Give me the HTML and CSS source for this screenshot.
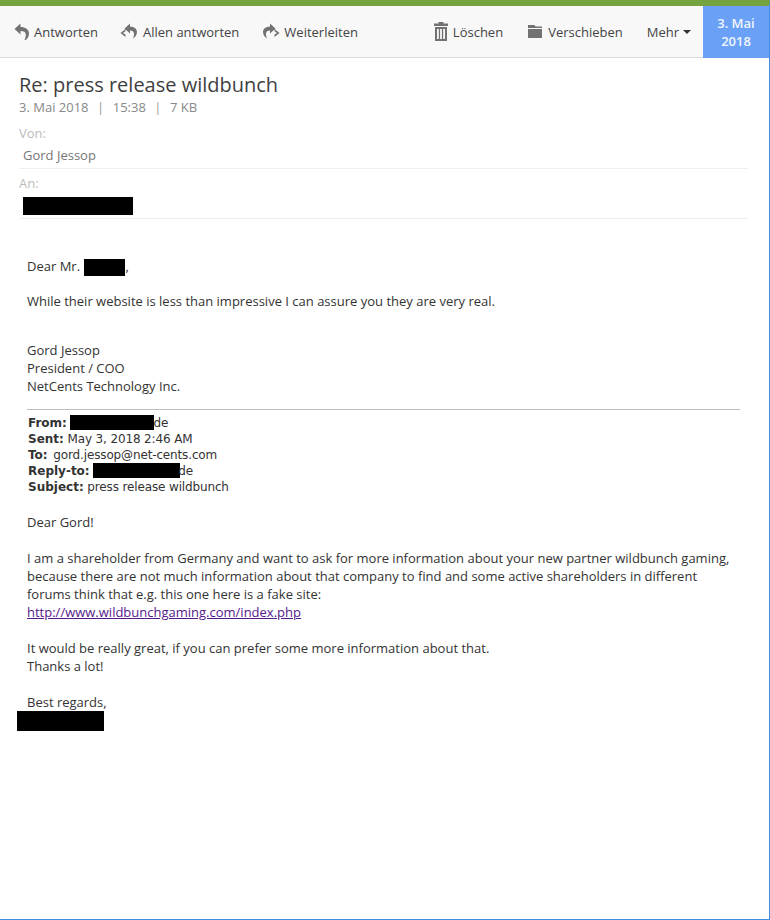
FILE: index.html
```html
<!DOCTYPE html>
<html lang="de">
<head>
<meta charset="utf-8">
<title>Re: press release wildbunch</title>
<link rel="stylesheet" href="styles.css">
</head>
<body>
<div class="frame">
  <header class="toolbar">
    <div class="actions">
      <a class="action a-reply"><svg class="ico" width="16" height="20" viewBox="0 0 16 20"><path d="M6.500 1.500 .5 7l6 5.500V9c3 0 5 .8 5.300 3.500.2 1.800-.6 4-1.300 5.500h1.200c2-1.500 3.300-3.800 3.300-6.500C15 7.500 11.500 5 6.500 5z"/></svg>Antworten</a>
      <a class="action a-all"><svg class="ico" width="18" height="20" viewBox="0 0 18 20"><path d="M5.500 7 .5 11l5 4v-2.500L3 11l2.500-1.800zM10 1.500 4.500 6.500 10 11.500V8.500c2.500 0 3.700 1 4 3 .2 1.800-.3 3.700-1.500 5 2.700-1.200 4.500-3.500 4.500-6.500C17 7 14.500 4.700 10 4.500z"/></svg>Allen antworten</a>
      <a class="action a-fwd"><svg class="ico" width="18" height="20" viewBox="0 0 18 20"><path d="M12.500 7 17.500 11l-5 4v-2.500L15 11l-2.500-1.800zM8 1.500 13.500 6.500 8 11.500V8.500c-2.500 0-3.700 1-4 3-.2 1.800.3 3.700 1.500 5C2.800 15.300 1 13 1 10c0-3 2.500-5.300 7-5.500z"/></svg>Weiterleiten</a>
    </div>
    <div class="actions actions-right">
      <a class="action a-del"><svg class="ico" width="14" height="19" viewBox="0 0 14 19"><path d="M4.500 0h5v1.500H14V4H0V1.500h4.500zM1 5h12v14H1zM3 7v10h1.800V7zM6.100 7v10h1.800V7zM9.200 7v10H11V7z" fill-rule="evenodd"/></svg>Löschen</a>
      <a class="action a-move"><svg class="ico" width="15" height="13" viewBox="0 0 15 13"><path d="M0 0h6.500L7.500 1.500H14V3H0zM0 4h14v9H0z"/></svg>Verschieben</a>
      <a class="action a-more">Mehr<span class="caret"></span></a>
    </div>
    <div class="datebox">3. Mai<br>2018</div>
  </header>
  <main class="mail">
    <h1 class="subject">Re: press release wildbunch</h1>
    <div class="meta">3. Mai 2018<span class="sep">|</span>15:38<span class="sep">|</span>7 KB</div>
    <div class="field">
      <div class="label">Von:</div>
      <div class="value">Gord Jessop</div>
    </div>
    <div class="field field-to">
      <div class="label">An:</div>
      <div class="value"><span class="redact r-to"></span></div>
    </div>
    <div class="body">
      <p class="p-dear">Dear Mr. <span class="redact r-name"></span>,</p>
      <p class="p-while">While their website is less than impressive I can assure you they are very real.</p>
      <p class="p-sig">Gord Jessop<br>President / COO<br>NetCents Technology Inc.</p>
      <hr class="rule">
      <div class="headers">
        <div><b>From:</b> <span class="redact r-from"></span>de</div>
        <div><b>Sent:</b> May 3, 2018 2:46 AM</div>
        <div><b class="b-to">To:</b> gord.jessop@net-cents.com</div>
        <div><b>Reply-to:</b> <span class="redact r-reply"></span>de</div>
        <div><b>Subject:</b> press release wildbunch</div>
      </div>
      <p class="p-gord">Dear Gord!</p>
      <p class="p-block">I am a shareholder from Germany and want to ask for more information about your new partner wildbunch gaming,<br>because there are not much information about that company to find and some active shareholders in different<br>forums think that e.g. this one here is a fake site:<br><a class="link">http://www.wildbunchgaming.com/index.php</a></p>
      <p class="p-block">It would be really great, if you can prefer some more information about that.<br>Thanks a lot!</p>
      <p class="p-block">Best regards,</p>
      <div class="redact r-sign"></div>
    </div>
  </main>
</div>
</body>
</html>
```
FILE: styles.css
```css
* { box-sizing: border-box; }
html, body { margin: 0; padding: 0; height: 100%; }
p { margin: 0; }
body { font-family: "Open Sans", sans-serif; font-size: 13px; color: #333; background: #fff; }
.frame { height: 920px; width: 770px; border-top: 6px solid #75a33f; border-right: 1px solid #3f8fe0; border-bottom: 1px solid #3f8fe0; overflow: hidden; }
.toolbar { display: flex; height: 52px; background: #f8f8f8; border-bottom: 1px solid #dcdcdc; }
.actions { display: flex; align-items: center; height: 51px; }
.actions-right { margin-left: auto; }
.action { display: flex; align-items: center; color: #444; font-size: 13px; white-space: nowrap; }
.ico { fill: #727272; margin-right: 4px; flex: none; }
.a-reply { margin-left: 14px; }
.a-all { margin-left: 22px; }
.a-all .ico { margin-right: 5px; }
.a-fwd { margin-left: 23px; }
.a-del .ico { margin-right: 5px; }
.a-move { margin-left: 25px; }
.a-more { margin-left: 24px; margin-right: 12px; }
.a-move .ico { margin-right: 5px; }
.caret { width: 0; height: 0; margin-left: 4px; border-left: 4px solid transparent; border-right: 4px solid transparent; border-top: 4px solid #333; }
.datebox { width: 66px; height: 52px; background: #6aa1f7; color: #f2f6fe; font-size: 13px; font-weight: 600; line-height: 18px; text-align: center; padding-top: 8px; flex: none; }
.mail { padding: 0 21px 0 19px; }
.subject { margin: 15px 0 0; font-size: 20px; font-weight: 400; line-height: 24px; color: #3f3f3f; }
.meta { margin-top: 1px; line-height: 18px; color: #888; }
.sep { margin: 0 8.5px; color: #999; }
.field { margin-top: 3px; height: 50px; border-bottom: 1px solid #eee; padding-top: 5px; }
.field + .field { margin-top: 0; }
.label { line-height: 18px; color: #bbb; }
.value { padding-left: 4px; margin-top: 4px; line-height: 18px; color: #777; }
.field-to .value { margin-top: 5px; }
.redact { background: #000; display: inline-block; vertical-align: top; }
.r-to { width: 110px; height: 18px; display: block; }
.body { padding-left: 8px; line-height: 18px; color: #333; }
.p-dear { margin-top: 38px; }
.r-name { width: 41px; height: 17px; margin: 2px 0 -2px 1px; }
.p-while { margin-top: 17px; }
.p-sig { margin-top: 31px; }
.rule { margin: 14px 8px 0 0; border: 0; border-top: 1px solid #b8bec4; }
.headers { font-family: "DejaVu Sans", sans-serif; font-size: 12px; line-height: 16px; margin: 5px 0 0 1px; color: #333; letter-spacing: -0.14px; }
.headers b { letter-spacing: 0; }
.headers .b-to { margin-right: 2px; }
.r-from { width: 84px; height: 15px; margin-left: -1px; }
.r-reply { width: 87px; height: 15px; margin-right: -2px; }
.p-gord { margin-top: 18px; }
.p-block { margin-top: 18px; }
.link { color: #551a8b; text-decoration: underline; }
.r-sign { width: 87px; height: 20px; margin: 0 0 0 -10px; }
```
